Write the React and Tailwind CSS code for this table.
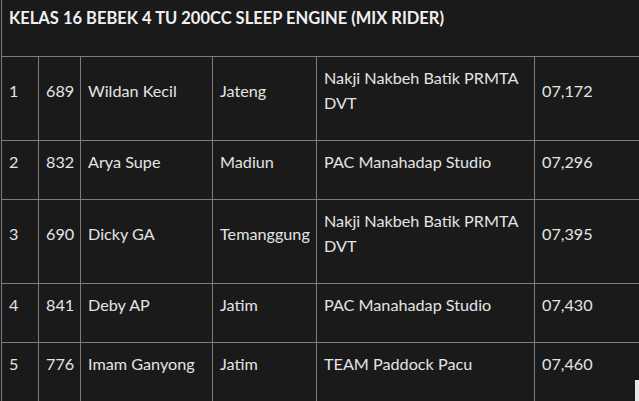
import React from 'react'

const rows = [
  { no: '1', num: '689', name: 'Wildan Kecil', from: 'Jateng', team: 'Nakji Nakbeh Batik PRMTA DVT', time: '07,172' },
  { no: '2', num: '832', name: 'Arya Supe', from: 'Madiun', team: 'PAC Manahadap Studio', time: '07,296' },
  { no: '3', num: '690', name: 'Dicky GA', from: 'Temanggung', team: 'Nakji Nakbeh Batik PRMTA DVT', time: '07,395' },
  { no: '4', num: '841', name: 'Deby AP', from: 'Jatim', team: 'PAC Manahadap Studio', time: '07,430' },
  { no: '5', num: '776', name: 'Imam Ganyong', from: 'Jatim', team: 'TEAM Paddock Pacu', time: '07,460' },
]

const cell = 'border border-[#7d7d7d] pl-[7px] pr-[4px] pt-[8px] pb-[8px] align-middle text-left'

const App = () => {
  return (
    <div className="relative w-[639px] h-[401px] overflow-hidden bg-[#1a1a1a] text-[#e4e4e4] font-['Lato','Liberation_Sans',sans-serif] text-[16.2px] leading-[25px]">
      <table className="ml-[1px] -mt-[1px] border-collapse w-[720px] table-fixed">
        <colgroup>
          <col className="w-[37px]" />
          <col className="w-[42px]" />
          <col className="w-[132px]" />
          <col className="w-[104px]" />
          <col className="w-[218px]" />
          <col />
        </colgroup>
        <thead>
          <tr>
            <th colSpan={6} className={cell + ' font-bold text-[#f0f0f0] text-[16.5px] !pt-[6px]'}>
              <p className="mb-[17px]">KELAS 16 BEBEK 4 TU 200CC SLEEP ENGINE (MIX RIDER)</p>
            </th>
          </tr>
        </thead>
        <tbody>
          {rows.map((r) => (
            <tr key={r.no}>
              {[r.no, r.num, r.name, r.from, r.team, r.time].map((v, i) => (
                <td key={i} className={cell}>
                  <p className="mb-[17px]">{v}</p>
                </td>
              ))}
            </tr>
          ))}
        </tbody>
      </table>
      <div className="absolute right-0 bottom-0 w-[4px] h-[21px] bg-[#e8e8e8]" />
    </div>
  )
}

export default App
